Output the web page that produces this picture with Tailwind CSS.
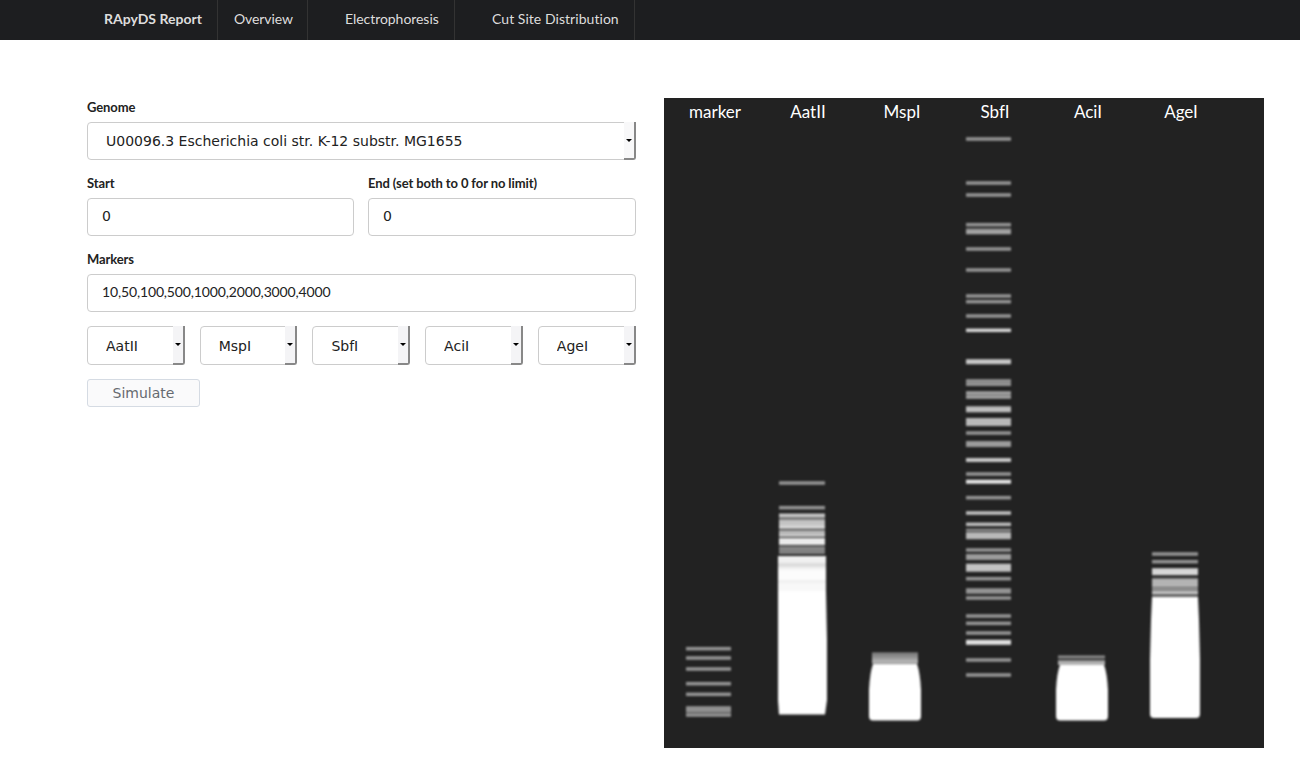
<!DOCTYPE html>
<html lang="en">
<head>
  <meta charset="UTF-8">
  <title>RApyDS Report</title>
  <script src="https://cdn.jsdelivr.net/npm/@tailwindcss/browser@4"></script>
</head>
<body class="bg-white overflow-hidden font-['Lato','Liberation_Sans',sans-serif] text-[#222]">
  <nav class="h-10 bg-[#1d1e20] flex pl-[89px] text-[14px] text-[#dddddd] leading-[38px]">
    <a class="w-[129px] pl-[15px] font-bold border-r border-[#333333]">RApyDS Report</a>
    <a class="w-[90px] pl-[16px] tracking-[-0.1px] border-r border-[#333333]">Overview</a>
    <a class="w-[147px] pl-[37px] tracking-[-0.05px] border-r border-[#333333]">Electrophoresis</a>
    <a class="w-[180px] pl-[37px] tracking-[0.05px] border-r border-[#333333]">Cut Site Distribution</a>
  </nav>

  <main class="flex pl-[87px] pt-[58px]">
    <form class="w-[549px] mr-[28px]">
      <label class="block text-[13px] font-bold tracking-[-0.1px] leading-[18px] mb-[6px]">Genome</label>
      <div class="relative h-[38px] mb-[14px]">
        <select class="w-full h-full appearance-none bg-white border border-[#cccccc] rounded-[4px] pl-[18px] text-[14px] text-[#222] font-['DejaVu_Sans',sans-serif]">
          <option>U00096.3 Escherichia coli str. K-12 substr. MG1655</option>
        </select>
        <span class="absolute right-0 top-0 bottom-0 w-[12px] bg-[#f8f8f9] border-r-2 border-b-2 border-[#888888] rounded-br-[3px] flex items-center justify-center">
          <i class="w-0 h-0 border-x-[3px] border-x-transparent border-t-[3px] border-t-black"></i>
        </span>
      </div>

      <div class="flex gap-[14px] mb-[14px]">
        <div class="w-[267px]">
          <label class="block text-[13px] font-bold tracking-[-0.1px] leading-[18px] mb-[6px]">Start</label>
          <input value="0" class="w-full h-[38px] border border-[#cccccc] rounded-[4px] px-[14px] pb-[2px] text-[14px] text-[#222] font-['DejaVu_Sans',sans-serif]">
        </div>
        <div class="flex-1">
          <label class="block text-[13px] font-bold tracking-[-0.1px] leading-[18px] mb-[6px]">End (set both to 0 for no limit)</label>
          <input value="0" class="w-full h-[38px] border border-[#cccccc] rounded-[4px] px-[14px] pb-[2px] text-[14px] text-[#222] font-['DejaVu_Sans',sans-serif]">
        </div>
      </div>

      <label class="block text-[13px] font-bold tracking-[-0.1px] leading-[18px] mb-[6px]">Markers</label>
      <input value="10,50,100,500,1000,2000,3000,4000" class="w-full h-[38px] border border-[#cccccc] rounded-[4px] px-[14px] pb-[3px] text-[14px] tracking-[-0.15px] text-[#222] mb-[14px]">

      <div class="flex gap-[15px] mr-[0.5px] mb-[14px]">
        <div class="relative flex-1 h-[39px]">
          <select class="w-full h-full appearance-none bg-white border border-[#cccccc] rounded-[4px] pl-[18px] pt-[2px] text-[14px] text-[#222] font-['DejaVu_Sans',sans-serif]"><option>AatII</option></select>
          <span class="absolute right-0 top-0 bottom-0 w-[12px] bg-[#f4f4f6] border-r-2 border-b-2 border-[#888888] rounded-br-[3px] flex items-center justify-center"><i class="w-0 h-0 border-x-[3px] border-x-transparent border-t-[3px] border-t-black"></i></span>
        </div>
        <div class="relative flex-1 h-[39px]">
          <select class="w-full h-full appearance-none bg-white border border-[#cccccc] rounded-[4px] pl-[18px] pt-[2px] text-[14px] text-[#222] font-['DejaVu_Sans',sans-serif]"><option>MspI</option></select>
          <span class="absolute right-0 top-0 bottom-0 w-[12px] bg-[#f4f4f6] border-r-2 border-b-2 border-[#888888] rounded-br-[3px] flex items-center justify-center"><i class="w-0 h-0 border-x-[3px] border-x-transparent border-t-[3px] border-t-black"></i></span>
        </div>
        <div class="relative flex-1 h-[39px]">
          <select class="w-full h-full appearance-none bg-white border border-[#cccccc] rounded-[4px] pl-[18px] pt-[2px] text-[14px] text-[#222] font-['DejaVu_Sans',sans-serif]"><option>SbfI</option></select>
          <span class="absolute right-0 top-0 bottom-0 w-[12px] bg-[#f4f4f6] border-r-2 border-b-2 border-[#888888] rounded-br-[3px] flex items-center justify-center"><i class="w-0 h-0 border-x-[3px] border-x-transparent border-t-[3px] border-t-black"></i></span>
        </div>
        <div class="relative flex-1 h-[39px]">
          <select class="w-full h-full appearance-none bg-white border border-[#cccccc] rounded-[4px] pl-[18px] pt-[2px] text-[14px] text-[#222] font-['DejaVu_Sans',sans-serif]"><option>AciI</option></select>
          <span class="absolute right-0 top-0 bottom-0 w-[12px] bg-[#f4f4f6] border-r-2 border-b-2 border-[#888888] rounded-br-[3px] flex items-center justify-center"><i class="w-0 h-0 border-x-[3px] border-x-transparent border-t-[3px] border-t-black"></i></span>
        </div>
        <div class="relative flex-1 h-[39px]">
          <select class="w-full h-full appearance-none bg-white border border-[#cccccc] rounded-[4px] pl-[18px] pt-[2px] text-[14px] text-[#222] font-['DejaVu_Sans',sans-serif]"><option>AgeI</option></select>
          <span class="absolute right-0 top-0 bottom-0 w-[12px] bg-[#f4f4f6] border-r-2 border-b-2 border-[#888888] rounded-br-[3px] flex items-center justify-center"><i class="w-0 h-0 border-x-[3px] border-x-transparent border-t-[3px] border-t-black"></i></span>
        </div>
      </div>

      <button type="button" class="block w-[113px] h-[28px] bg-[#fafafb] border border-[#d5dbe3] rounded-[3px] text-[14px] text-[#666a70] font-['DejaVu_Sans',sans-serif]">Simulate</button>
    </form>

    <svg id="gel" width="600" height="650" viewBox="664 98 600 650" class="block bg-[#222222]">
      <defs>
        <filter id="blur" x="-10%" y="-10%" width="120%" height="120%" color-interpolation-filters="sRGB"><feGaussianBlur stdDeviation="1.1"/></filter>
      </defs>
      <g id="bands" filter="url(#blur)"></g>
      <g fill="#ffffff" font-size="17" text-anchor="middle">
        <text x="715" y="118">marker</text>
        <text x="808" y="118">AatII</text>
        <text x="902" y="118">MspI</text>
        <text x="995" y="118">SbfI</text>
        <text x="1088" y="118">AciI</text>
        <text x="1181" y="118">AgeI</text>
      </g>
    </svg>
  </main>

  <script>
    // each band: [center y, height, gray level]
    const thin = 150;
    const lanes = [
      { x0: 686, x1: 731, bands: [[648.7,3.5,thin],[658,3.5,thin],[669,3.5,thin],[683.7,3.5,thin],[694.3,3.5,thin],[708,3.5,thin],[711,3,thin],[715,3.5,thin]] },
      { x0: 779, x1: 825, bands: [[483,3.5,thin],[507.7,3.5,thin],[515.5,4,200],[519,2.5,125],[522.5,5,195],[527,4,210],[531.5,3,175],[535,4,195],[541.5,7,235],[547,2,130],[549.5,2,175],[552.5,2.5,150]] },
      { x0: 778, x1: 826, bands: [[559.5,7,240],[565,4,220],[568.5,3.5,240],[575,11,252],[581.5,3,240],[587,8,248]] },
      { x0: 966, x1: 1011, bands: [[139,3.5,thin],[183,3.5,thin],[195,3.5,thin],[224.7,3.5,thin],[230,3,thin],[232.5,3.5,165],[249,3.5,thin],[270,3.5,thin],[296,3.5,thin],[301.7,3.5,thin],[316,3.5,thin],[330.3,3.5,215],[361.7,5,200],[381,3.5,thin],[384.5,3,thin],[393,3.5,165],[397,3.5,165],[409.3,6,190],[422,8,185],[433,3.5,thin],[444,6,155],[460,4,200],[474,3.5,thin],[481.7,4,230],[497.7,3.5,thin],[513,3.5,195],[524.3,3.5,190],[530,2.5,thin],[535.7,7,185],[550,3.5,thin],[557,6,155],[567.7,8,195],[578.7,3.5,thin],[590,3.5,thin],[592.5,2.5,thin],[598,3.5,thin],[616,3.5,thin],[623.3,3.5,thin],[633,3.5,thin],[642.3,5,225],[660,3.5,thin],[675,3.5,thin]] },
      { x0: 872, x1: 918, bands: [[654,3,135],[657,3,155],[660,3,180],[662.5,2,210]] },
      { x0: 1058, x1: 1105, bands: [[657,3,140],[661,2,155],[663.5,3,180]] },
      { x0: 1152, x1: 1198, bands: [[554,3.5,thin],[561.7,3.5,thin],[571.7,7,215],[578.5,1.5,120],[583,8,180],[589,3,160],[592.5,3,200],[595.5,2,130]] }
    ];

    // solid white blocks at the bottom of the lanes
    const blocks = [
      "M778 591 H826 L827 640 V700 L825 714.5 H779 L778 700 V640 Z",
      "M873 664 H917 Q920 672 921 690 V716 Q921 720.5 917 720.5 H873 Q869 720.5 869 716 V690 Q870 672 873 664 Z",
      "M1060 665 H1104 Q1107 672 1108 690 V716 Q1108 720.5 1104 720.5 H1060 Q1056 720.5 1056 716 V690 Q1057 672 1060 665 Z",
      "M1152 597 H1198 L1199 620 L1200 660 V714 Q1200 718 1196 718 H1154 Q1150 718 1150 714 V660 L1151 620 Z"
    ];

    const group = document.getElementById("bands");
    const ns = "http://www.w3.org/2000/svg";

    lanes.forEach(lane => {
      lane.bands.forEach(([y, h, g]) => {
        const r = document.createElementNS(ns, "rect");
        r.setAttribute("x", lane.x0);
        r.setAttribute("width", lane.x1 - lane.x0);
        r.setAttribute("y", y - h / 2);
        r.setAttribute("height", h);
        r.setAttribute("fill", `rgb(${g},${g},${g})`);
        group.appendChild(r);
      });
    });

    blocks.forEach(d => {
      const p = document.createElementNS(ns, "path");
      p.setAttribute("d", d);
      p.setAttribute("fill", "#ffffff");
      group.appendChild(p);
    });
  </script>
</body>
</html>
